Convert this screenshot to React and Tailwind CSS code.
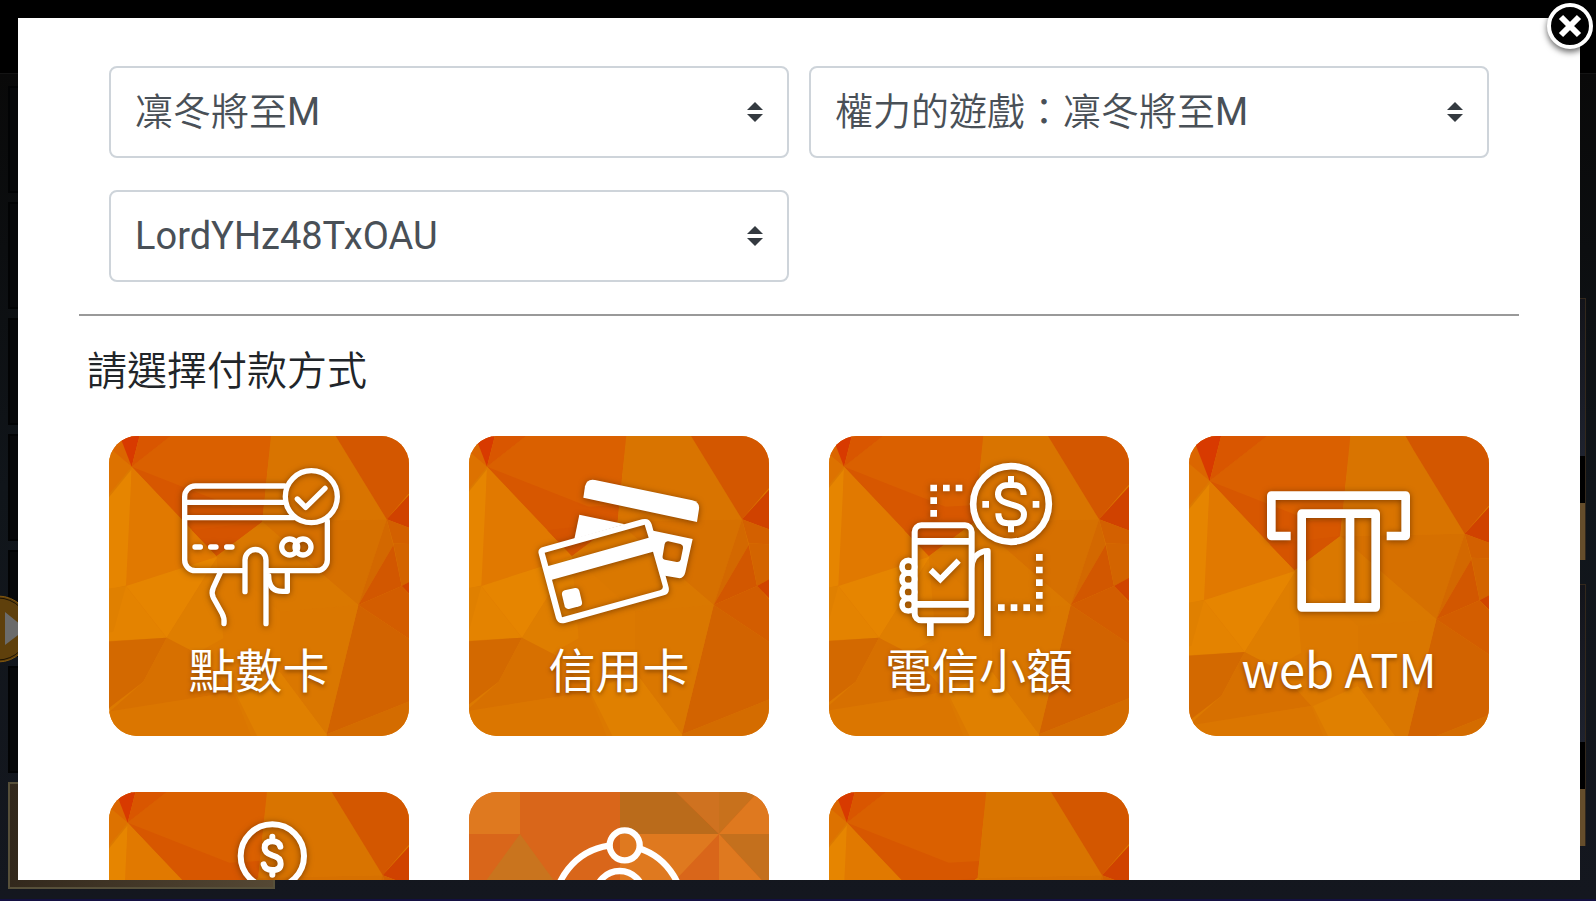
import React from 'react';

const GAMES = ['凜冬將至M'];
const SERVERS = ['權力的遊戲：凜冬將至M'];
const ROLES = ['LordYHz48TxOAU'];

// Low-poly facets of the orange tile, painted back to front
const FACETS = [
    ['-40,-40 1000,-40 1000,1000 -40,1000', '#dc7900'],
    // upper left
    ['-40,-40 120,-40 95,125 -40,20', '#db6600'],
    ['-40,10 95,125 -40,290', '#dd7200'],
    ['39,-20 132,-20 95,125', '#d83a00'],
    ['132,-20 280,-20 95,125', '#d95600'],
    ['95,125 280,-20 518,-20 500,150 487,290 350,393', '#d75700'],
    ['95,125 280,-20 518,-20 515,33 500,150 492,240 400,245', '#da6000'],
    ['275,316 487,290 350,393', '#d55400'],
    // left side
    ['95,133 85,480 -40,510 -40,300', '#e68500'],
    ['95,125 275,316 350,395 78,483 95,133', '#e17900'],
    ['350,395 350,400 200,638 78,483', '#e68500'],
    ['78,483 200,638 -40,652 -40,610', '#e48300'],
    ['-40,500 78,483 40,620 -40,640', '#e08000'],
    ['350,400 370,640 280,690 200,638', '#df7e00'],
    // lower left
    ['-40,654 200,638 130,770 -40,900', '#d36900'],
    ['200,638 300,690 400,800 27,862 130,770', '#d77000'],
    ['-40,870 400,800 480,1000 -40,1000', '#db7600'],
    ['405,800 540,740 680,928 700,1000 505,1000', '#e08000'],
    // centre
    ['487,290 860,283 775,540 670,450', '#d67000'],
    ['487,290 670,450 775,540 540,560 350,393', '#da7800'],
    ['518,-20 677,-20 707,33 860,283 487,290', '#d97400'],
    // right side
    ['677,-20 1000,-20 1000,120 927,205 860,283 707,33', '#d35700'],
    ['860,283 1000,130 1000,335', '#d04200'],
    ['860,283 1000,335 1000,360 880,355', '#d36000'],
    ['860,283 880,360 775,540', '#d36800'],
    ['880,360 905,483 775,540', '#d25700'],
    ['880,355 1000,360 1000,430 905,483', '#d36400'],
    ['905,483 1000,430 1000,580', '#d04500'],
    ['775,540 905,483 1000,585 1000,690', '#d35d00'],
    ['775,540 1000,690 1000,800 680,928', '#d26300'],
    ['680,928 1000,800 1000,1000 690,1000', '#d46c00'],
    ['540,560 775,540 680,928 540,740', '#da7700'],
];

const MOSAIC = [
    ['0,0 300,0 300,300 0,300', '#d9661a'],
    ['0,0 51,0 51,42 0,42', '#df791f'],
    ['51,42 0,112 102,112', '#c9741e'],
    ['151,0 207,0 250,42 151,42', '#ba6b1b'],
    ['207,0 250,0 250,42', '#cf7220'],
    ['250,0 289,0 250,42', '#c8711c'],
    ['289,0 300,0 300,42 250,42', '#df791f'],
    ['151,42 250,42 199,96 151,96', '#df791f'],
    ['250,42 300,42 300,96', '#c4701d'],
    ['250,42 300,96 250,96', '#df791f'],
];

function PointCardIcon() {
    return (
        <g stroke="#fff" strokeWidth="16" strokeLinecap="round" strokeLinejoin="round">
            <path d="M554 183H286a32 32 0 0 0-32 32V405a32 32 0 0 0 32 32H430M506 437H650a32 32 0 0 0 32-32V288" />
            <path d="M254 232H550M254 278H580" />
            <circle cx="634" cy="215" r="78" />
            <path d="M592 222 617 247 675 190" />
            <path d="M285 366H301M332 366H348M380 366H396" />
            <circle cx="569" cy="366" r="24" />
            <circle cx="609" cy="366" r="24" />
            <path d="M435 500V405a31.5 31.5 0 0 1 63 0V596" />
            <path d="M362 440 340 488Q333 503 340 518L366 565Q374 580 372 596" />
            <path d="M562 445V499H548Q506 499 506 452" />
        </g>
    );
}

function CreditCardIcon() {
    return (
        <g fill="#fff" fillRule="evenodd">
            <path d="M370 218 375 184Q380 160 405 165L697 226Q720 232 717 252L711 291Z" />
            <path d="M358 269 495 298 343 342Z" />
            <path d="M573 316 698 342 676 442Q671 462 655 459L615 452 590 385ZM625 349Q616 348 614 357L608 393Q606 402 615 404L650 411Q659 412 662 404L669 370Q670 360 661 357Z" />
            <path d="M249 366 546 283Q568 277 575 298L626 487Q630 505 612 511L315 594Q294 599 288 580L236 386Q232 371 249 366ZM254 383 265 423 566 338 554 299ZM276 464 306 577 600 496Q611 493 608 482L579 380Z" />
            <path d="M314 496 345 489Q355 487 358 497L366 531Q368 541 358 544L327 552Q317 554 314 544L306 510Q304 500 314 496Z" />
        </g>
    );
}

function TelecomIcon() {
    return (
        <g stroke="#fff" strokeWidth="18">
            <rect x="284" y="301" width="171" height="285" rx="20" />
            <path d="M284 349H455M284 538H455M331 590V633" strokeWidth="20" />
            <path d="M332 435 361 463 416 407" />
            <circle cx="573" cy="237" r="113.5" strokeWidth="20" />
            <path d="M611 210C611 190 598 180 582 180H564C546 180 534 190 534 208C534 226 550 232 573 238C598 245 612 250 612 268C612 286 600 295 582 295H564C546 295 535 286 535 265M573 153V180M573 295V322" />
            <g strokeWidth="17">
                <circle cx="265" cy="425" r="19" />
                <circle cx="265" cy="463" r="19" />
                <circle cx="265" cy="501" r="19" />
                <circle cx="265" cy="539" r="19" />
            </g>
            <path fill="#fff" stroke="none" d="M462 386Q480 369 504 369Q512 369 512 378V633H492V388Q466 394 463 430Z" />
            <g strokeWidth="20">
                <path d="M331 189H427" strokeDasharray="20 18" />
                <path d="M341 217V275" strokeDasharray="20 18" />
                <path d="M487 238H507M638 238H658" />
                <path d="M658 387V560" strokeDasharray="20 18" />
                <path d="M534 548H632" strokeDasharray="20 18" />
            </g>
        </g>
    );
}

function AtmIcon() {
    return (
        <g stroke="#fff" strokeWidth="26" strokeLinejoin="round">
            <path d="M332 333H274V212H677V333H620" />
            <rect x="365" y="266" width="222" height="281" />
            <path d="M510 266V547" />
        </g>
    );
}

function CoinIcon() {
    return (
        <g stroke="#fff" strokeWidth="18" strokeLinecap="round">
            <circle cx="517" cy="225" r="95" />
            <path d="M541 197Q537 181 517 181Q494 181 494 201Q494 216 517 223Q542 229 542 248Q542 267 517 267Q496 267 491 250M517 167V181M517 267V281" />
        </g>
    );
}

function OrbitIcon() {
    return (
        <g stroke="#fff" strokeWidth="19">
            <path d="M447 194A192 192 0 0 0 477 576A192 192 0 0 0 535 201" />
            <circle cx="494" cy="193" r="45" />
            <circle cx="479" cy="342" r="72" />
        </g>
    );
}

const METHODS = [
    { id: 'point', label: '點數卡', Icon: PointCardIcon, shift: 'translate(0 0)' },
    { id: 'credit', label: '信用卡', Icon: CreditCardIcon, shift: 'translate(-14 0)' },
    { id: 'telecom', label: '電信小額', Icon: TelecomIcon, shift: 'translate(-23 0)' },
    { id: 'atm', label: 'web ATM', Icon: AtmIcon, shift: 'translate(-6 43)' },
    { id: 'coin', Icon: CoinIcon, shift: 'translate(-12 0)' },
    { id: 'orbit', Icon: OrbitIcon, mosaic: true },
    { id: 'other', shift: 'translate(-14 0)' },
];

function TileBackground({ mosaic, shift }) {
    const shapes = mosaic ? MOSAIC : FACETS;
    return (
        <svg
            viewBox={mosaic ? '0 0 300 300' : '27 33 900 900'}
            className="absolute inset-0 size-full"
            aria-hidden="true"
        >
            <g transform={shift}>
                {shapes.map(([points, fill]) => (
                    <polygon key={points} points={points} fill={fill} />
                ))}
            </g>
        </svg>
    );
}

function PaymentTile({ label, Icon, mosaic, shift }) {
    return (
        <button
            type="button"
            aria-label={label || '付款方式'}
            className="relative flex aspect-square items-end justify-center overflow-hidden rounded-[28px] pb-9 cursor-pointer"
        >
            <TileBackground mosaic={mosaic} shift={shift} />
            {Icon && (
                <svg
                    viewBox="27 33 900 900"
                    fill="none"
                    className={`absolute inset-0 size-full ${mosaic ? '' : 'drop-shadow-[0_1px_3px_rgba(90,40,0,0.7)]'}`}
                    aria-hidden="true"
                >
                    <Icon />
                </svg>
            )}
            {label && (
                <span className="relative font-['Noto_Sans_CJK_TC',sans-serif] text-[47px] leading-[64px] text-white text-shadow-[0_2px_4px_rgba(90,40,0,0.6)]">
                    {label}
                </span>
            )}
        </button>
    );
}

function SelectBox({ label, options }) {
    return (
        <div className="relative">
            <select
                aria-label={label}
                className="block h-[92px] w-full appearance-none rounded-lg border-2 border-[#ced4da] bg-white pr-16 pl-6 font-[Roboto,'Noto_Sans_CJK_TC_DemiLight','Noto_Sans_CJK_TC',sans-serif] text-[38px] text-[#495057]"
            >
                {options.map((o) => (
                    <option key={o}>{o}</option>
                ))}
            </select>
            <svg
                viewBox="0 0 16 20"
                className="pointer-events-none absolute top-9 right-[26px] h-5 w-4"
                fill="#343a40"
                aria-hidden="true"
            >
                <path d="M0 8 8 0 16 8ZM0 12H16L8 20Z" />
            </svg>
        </div>
    );
}

// Dimmed game page behind the dialog
function Backdrop() {
    return (
        <div className="absolute inset-0 flex flex-col border-b-2 border-[#141042] bg-[#14171e]" aria-hidden="true">
            <div className="h-[74px] border-b border-[#141414] bg-black" />
            <div className="flex flex-1 justify-between bg-linear-to-b from-[#090909] via-[#10151a] to-[#14171f]">
                <div className="relative ml-2 flex w-[267px] flex-col gap-[9px] pt-3">
                    {[0, 1, 2, 3, 4, 5].map((i) => (
                        <div key={i} className="h-[107px] border-2 border-black/60 bg-[#07080a]" />
                    ))}
                    <div className="h-[107px] border-2 border-[#57503a] bg-linear-to-r from-[#32281c] to-[#554834]" />
                    <svg viewBox="0 0 68 68" className="absolute top-[521px] -left-11 size-[68px]">
                        <circle cx="34" cy="34" r="33" fill="#5f400c" stroke="#80560f" />
                        <circle cx="34" cy="34" r="31" fill="none" stroke="#1b1203" />
                        <path d="M41 17 62 34 41 50Z" fill="#6b6b6b" />
                    </svg>
                </div>
                <div className="mr-[10px] flex w-5 flex-col gap-6 pt-6">
                    <div className="h-[176px]" />
                    {[0, 1].map((i) => (
                        <div key={i} className="flex h-[262px] flex-col border-r border-[#33281c]">
                            <div className="flex-1 border-t border-[#33281c] bg-linear-to-b from-[#13141a] to-[#1e222e]" />
                            <div className="h-[47px] bg-black" />
                            <div className="h-[57px] bg-[#654d2b]" />
                        </div>
                    ))}
                </div>
            </div>
        </div>
    );
}

function App() {
    return (
        <div className="relative h-screen overflow-hidden pt-[18px] pr-4 pb-[21px] pl-[18px] font-[Roboto,'Noto_Sans_CJK_TC',sans-serif]">
            <Backdrop />

            <main className="relative h-full overflow-hidden bg-white px-[61px] pt-12">
                {/* Game, server and character */}
                <div className="grid grid-cols-2 gap-x-5 gap-y-8 px-[30px]">
                    <SelectBox label="遊戲" options={GAMES} />
                    <SelectBox label="伺服器" options={SERVERS} />
                    <SelectBox label="角色" options={ROLES} />
                </div>

                <hr className="mt-8 border-t-2 border-[#999]" />

                <h1 className="mt-6 pl-2 text-[40px] leading-[64px] font-[350] text-[#212529]">請選擇付款方式</h1>

                {/* Payment methods */}
                <div className="mt-8 grid grid-cols-4 gap-x-[60px] gap-y-14 px-[30px]">
                    {METHODS.map(({ id, ...method }) => (
                        <PaymentTile key={id} {...method} />
                    ))}
                </div>
            </main>

            <button
                type="button"
                aria-label="關閉"
                className="absolute top-[3px] right-[3px] size-[46px] cursor-pointer rounded-full border-4 border-white bg-black shadow-[0_3px_6px_rgba(0,0,0,0.6)]"
            >
                <svg viewBox="0 0 38 38" className="size-full" stroke="#fff" strokeWidth="6" aria-hidden="true">
                    <path d="M10 10 28 28M28 10 10 28" />
                </svg>
            </button>
        </div>
    );
}

export default App;
